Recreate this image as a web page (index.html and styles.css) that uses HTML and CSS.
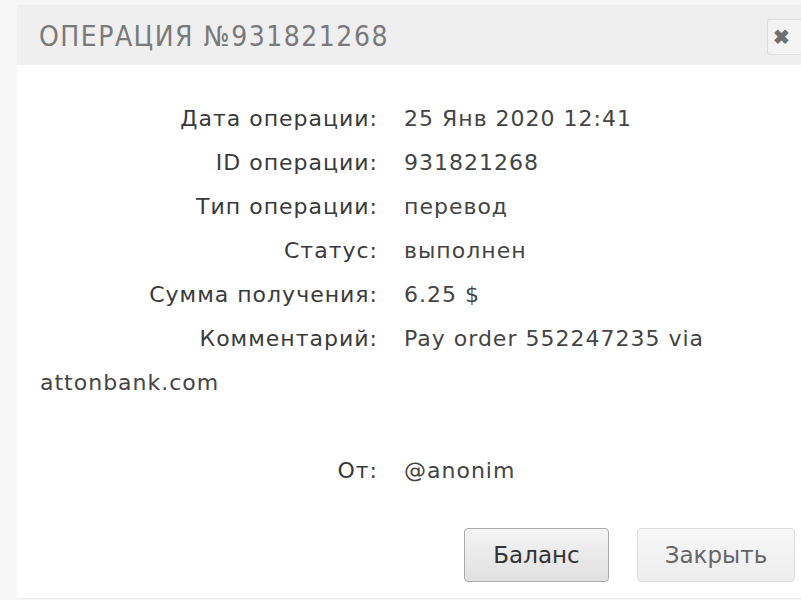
FILE: index.html
```html
<!DOCTYPE html>
<html>
	<head>
		<meta charset="utf-8" />
		<title>Операция</title>
		<link rel="stylesheet" href="styles.css">
	</head>
	<body>
		<div class="page">
			<div class="modal">
				<div class="modal-head">
					<h2 class="modal-title">ОПЕРАЦИЯ №931821268</h2>
					<button class="close-btn" type="button">&#10006;</button>
				</div>
				<div class="modal-body">
					<p class="row"><span class="label">Дата операции:</span>25 Янв 2020 12:41</p>
					<p class="row"><span class="label">ID операции:</span>931821268</p>
					<p class="row"><span class="label">Тип операции:</span>перевод</p>
					<p class="row"><span class="label">Статус:</span>выполнен</p>
					<p class="row"><span class="label">Сумма получения:</span>6.25 $</p>
					<p class="row"><span class="label">Комментарий:</span><span>Pay order 552247235 via</span> <span>attonbank.com</span></p>
					<p class="row row-gap"><span class="label">От:</span>@anonim</p>
				</div>
				<div class="modal-foot">
					<button class="btn btn-main" type="button">Баланс</button>
					<button class="btn" type="button">Закрыть</button>
				</div>
			</div>
		</div>
	</body>
</html>
```

FILE: styles.css
```css
html, body {
	margin:0;
	padding:0;
	background:#f6f6f6;
}
.page {
	padding-left:17px;
	padding-top:5px;
	height:595px;
	overflow:hidden;
}
.modal {
	background:#fff;
	height:593px;
	border-bottom:1px solid #eee;
}
.modal-head {
	background:#efefef;
	height:60px;
	display:flex;
	align-items:center;
	justify-content:space-between;
	padding-left:22px;
}
.modal-title {
	margin:2px 0 0 0;
	font-family:"DejaVu Sans Condensed", "DejaVu Sans", sans-serif;
	font-weight:normal;
	font-size:28px;
	letter-spacing:1.5px;
	color:#7a7a7a;
}
.close-btn {
	width:34px;
	height:36px;
	margin-top:3px;
	border:1px solid #ddd;
	border-right:0;
	border-radius:3px 0 0 3px;
	background:#f3f3f3;
	color:#6f6f6f;
	font-size:20px;
	font-weight:bold;
	padding:0 0 0 5px;
	text-align:left;
}
.modal-body {
	padding:32px 0 0 23px;
	font-family:"DejaVu Sans", sans-serif;
	font-size:22px;
	letter-spacing:1px;
	color:#444;
}
.row {
	margin:0;
	line-height:44px;
}
.row-gap {
	margin-top:44px;
}
.label {
	display:inline-block;
	width:338px;
	text-align:right;
	margin-right:26px;
	color:#3a3a3a;
}
.modal-foot {
	display:flex;
	justify-content:flex-end;
	gap:28px;
	padding-top:35px;
	padding-right:6px;
}
.btn {
	font-family:"DejaVu Sans", sans-serif;
	font-size:23px;
	color:#666;
	height:54px;
	width:158px;
	border:1px solid #ddd;
	border-radius:4px;
	background:linear-gradient(#f7f7f7, #ededed);
}
.btn-main {
	width:145px;
	color:#333;
	border-color:#aaa;
	background:linear-gradient(#f4f4f4, #e0e0e0);
}
```
